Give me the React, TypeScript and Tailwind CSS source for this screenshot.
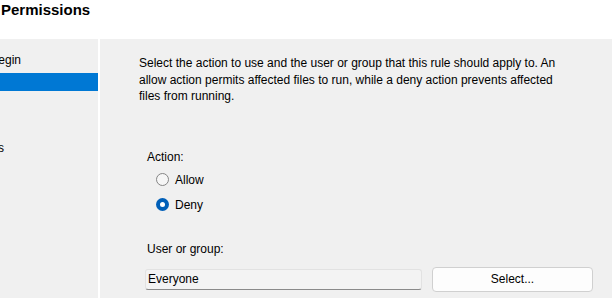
import React from "react";

// Permissions step of a rule wizard (cropped window)
// end = where the label's right edge sits (the window is cut off on the left)
const steps = [
  { label: "Before You Begin", end: "w-[21px]", active: false },
  { label: "Permissions", end: "w-0", active: true },
  { label: "Conditions", end: "w-0", active: false },
  { label: "Publisher", end: "w-0", active: false },
  { label: "Exceptions", end: "w-[4px]", active: false },
];

const Radio: React.FC<{ checked?: boolean; label: string; className?: string }> = ({ checked, label, className }) => (
  <div className={`flex h-[16px] items-center ${className ?? ""}`}>
    {checked ? (
      <span className="flex h-[13px] w-[13px] items-center justify-center rounded-full bg-[#005fb8]">
        <span className="h-[5px] w-[5px] rounded-full bg-white" />
      </span>
    ) : (
      <span className="h-[13px] w-[13px] rounded-full border border-[#858585] bg-[#f6f6f6]" />
    )}
    <span className="ml-[6px]">{label}</span>
  </div>
);

export default function App() {
  return (
    <div className="flex h-[298px] w-[612px] flex-col overflow-hidden bg-[#f0f0f0] text-[12px] text-black font-['Liberation_Sans',Arial,sans-serif]">
      {/* Header */}
      <div className="h-[39px] shrink-0 bg-white">
        <h1 className="ml-[1px] mt-[2px] text-[15px] font-bold leading-[15px]">Permissions</h1>
      </div>

      <div className="flex flex-1">
        {/* Step list */}
        <div className="w-[98px] shrink-0 overflow-hidden pt-[12px]">
          <div className="flex flex-col gap-[4px]">
            {steps.map((s) => (
              <div key={s.label} className={`flex h-[18px] items-center ${s.active ? "bg-[#0078d4] text-white" : ""}`}>
                <div className={`flex justify-end whitespace-nowrap ${s.end}`}>
                  <span>{s.label}</span>
                </div>
              </div>
            ))}
          </div>
        </div>
        <div className="w-[2px] shrink-0 bg-white" />

        {/* Content */}
        <div className="flex-1 pl-[39px] pt-[16px]">
          <p className="w-[430px] leading-[16.5px]">
            Select the action to use and the user or group that this rule should apply to. An
            allow action permits affected files to run, while a deny action prevents affected
            files from running.
          </p>

          <div className="ml-[8px] mt-[44px] leading-[16px]">Action:</div>
          <Radio label="Allow" className="ml-[17px] mt-[7px]" />
          <Radio label="Deny" checked className="ml-[17px] mt-[9px]" />

          <div className="ml-[8px] mt-[28px] leading-[16px]">User or group:</div>
          <div className="mt-[10px] flex items-center">
            <div className="ml-[6px] flex h-[21px] w-[277px] items-center rounded-[3px] border border-[#e2e2e2] border-b-[#8a8a8a] bg-[#f3f3f3] pl-[2px]">
              Everyone
            </div>
            <button className="ml-[10px] h-[25px] w-[161px] rounded-[4px] border border-[#d0d0d0] bg-[#fdfdfd] text-[12px]">
              Select...
            </button>
          </div>
        </div>
      </div>
    </div>
  );
}
